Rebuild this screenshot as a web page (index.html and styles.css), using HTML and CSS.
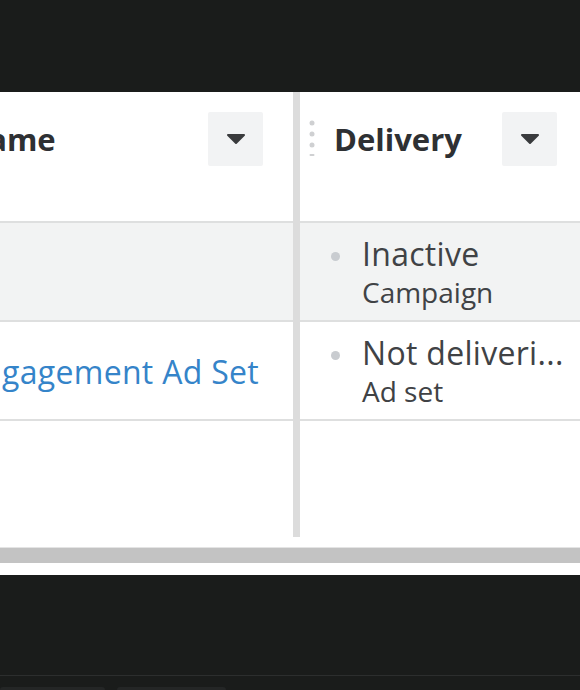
FILE: index.html
```html
<!DOCTYPE html>
<html>
  <head>
    <title>Ad sets</title>
    <link rel="stylesheet" href="styles.css">
  </head>
  <body>
    <div class="topbar"></div>

    <div class="panel">
      <div class="viewport">
        <div class="grid">
          <!-- header -->
          <div class="head head-name">
            <span class="label">Name</span>
            <button class="menu">
              <svg width="20" height="12" viewBox="0 0 20 12"><path d="M2 2 H18 L10 10 Z" /></svg>
            </button>
          </div>
          <div class="divider"></div>
          <div class="head head-delivery">
            <svg class="handle" width="6" height="38" viewBox="0 0 6 38">
              <circle cx="3" cy="3" r="2.5" />
              <circle cx="3" cy="14" r="2.5" />
              <circle cx="3" cy="25" r="2.5" />
              <rect x="0.5" y="34" width="5" height="2" rx="1" />
            </svg>
            <span class="label">Delivery</span>
            <button class="menu">
              <svg width="20" height="12" viewBox="0 0 20 12"><path d="M2 2 H18 L10 10 Z" /></svg>
            </button>
          </div>

          <!-- campaign row -->
          <div class="cell name shaded"></div>
          <div class="cell status shaded">
            <span class="dot"></span>
            <div>
              <p class="state">Inactive</p>
              <p class="kind">Campaign</p>
            </div>
          </div>

          <!-- ad set row -->
          <div class="cell name">
            <a href="#" class="link">Engagement Ad Set</a>
          </div>
          <div class="cell status">
            <span class="dot"></span>
            <div>
              <p class="state">Not deliveri...</p>
              <p class="kind">Ad set</p>
            </div>
          </div>

          <div class="filler"></div>
          <div class="filler"></div>
        </div>
      </div>
      <div class="scrollbar"></div>
    </div>

    <div class="bottombar">
      <div class="tabs">
        <span class="tab"></span>
        <span class="tab wide"></span>
      </div>
    </div>
  </body>
</html>
```

FILE: styles.css
```css
html, body {
  margin: 0;
  height: 100%;
}
body {
  background-color: #1a1c1b;
  font-family: 'Open Sans', 'Liberation Sans', sans-serif;
  overflow: hidden;
}
p {
  margin: 0;
}

.topbar {
  height: 92px;
}

.panel {
  background-color: #fff;
  height: 483px;
}
.viewport {
  height: 445px;
  overflow: hidden;
}
.grid {
  display: grid;
  grid-template-columns: 333px 7px 287px;
  grid-template-rows: 131px 99px 99px 1fr;
  height: 100%;
  margin-left: -40px;
}
.divider {
  grid-column: 2;
  grid-row: 1 / 5;
  background-color: #dcdcdc;
}

/* column headers */
.head {
  display: flex;
  align-items: flex-start;
  padding-top: 20px;
  box-sizing: border-box;
  border-bottom: 2px solid #dedfdf;
}
.head .label {
  flex: 1;
  font-size: 31px;
  font-weight: 700;
  color: #2e3033;
  line-height: 54px;
}
.head-name {
  padding-left: 3px;
  padding-right: 30px;
}
.head-delivery {
  padding-left: 9px;
  padding-right: 30px;
}
.handle {
  fill: #cfd0d2;
  margin: 8px 19px 0 0;
}
.menu {
  width: 55px;
  height: 54px;
  border: none;
  border-radius: 2px;
  background-color: #f2f3f4;
  padding: 0;
  display: flex;
  align-items: center;
  justify-content: center;
}
.menu svg {
  fill: #3a3b3d;
  stroke: #3a3b3d;
  stroke-width: 2;
  stroke-linejoin: round;
}

/* rows */
.cell {
  border-bottom: 2px solid #dedfdf;
}
.shaded {
  background-color: #f2f3f3;
}
.name {
  display: flex;
  align-items: center;
  padding-left: 4px;
}
.link {
  color: #3584c9;
  font-size: 32px;
  letter-spacing: 0.3px;
  text-decoration: none;
  white-space: nowrap;
  margin-top: 2px;
}
.status {
  display: flex;
  align-items: flex-start;
  padding: 13px 0 0 31px;
  color: #404245;
}
.dot {
  width: 9px;
  height: 9px;
  border-radius: 50%;
  background-color: #c9ccd0;
  margin: 16px 22px 0 0;
  flex: none;
}
.state {
  font-size: 32px;
  letter-spacing: 0.3px;
  line-height: 36px;
  white-space: nowrap;
}
.kind {
  font-size: 28px;
  line-height: 40px;
}

.scrollbar {
  margin-top: 10px;
  height: 16px;
  background-color: #c3c3c3;
  border-top: 1px solid #e4e4e4;
  box-sizing: border-box;
}

.bottombar {
  height: 115px;
  display: flex;
  flex-direction: column;
  justify-content: flex-end;
}
.tabs {
  border-top: 1px solid #2c2e2e;
  height: 14px;
  display: flex;
  align-items: flex-end;
  gap: 12px;
}
.tab {
  width: 105px;
  height: 3px;
  background-color: #242626;
  border-radius: 4px 4px 0 0;
}
.tab.wide {
  width: 109px;
}
```
